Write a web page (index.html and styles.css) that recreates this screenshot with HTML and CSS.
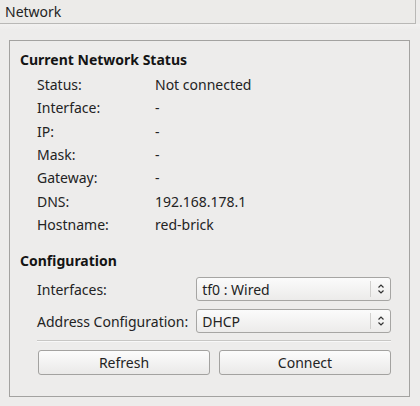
FILE: index.html
```html
<!DOCTYPE html>
<html>
<head>
<meta charset="utf-8">
<link rel="stylesheet" href="styles.css">
</head>
<body>
<div class="tabbar"><span class="tab-title">Network</span></div>
<div class="page">
  <div class="frame">
    <div class="section-title">Current Network Status</div>
    <div class="status-grid">
      <div class="lbl">Status:</div><div class="val">Not connected</div>
      <div class="lbl">Interface:</div><div class="val">-</div>
      <div class="lbl">IP:</div><div class="val">-</div>
      <div class="lbl">Mask:</div><div class="val">-</div>
      <div class="lbl">Gateway:</div><div class="val">-</div>
      <div class="lbl">DNS:</div><div class="val">192.168.178.1</div>
      <div class="lbl">Hostname:</div><div class="val">red-brick</div>
    </div>
    <div class="section-title config-title">Configuration</div>
    <div class="config-grid">
      <div class="lbl">Interfaces:</div>
      <div class="combo"><span class="combo-text">tf0 : Wired</span><span class="combo-arrow"><svg width="8" height="12" viewBox="0 0 8 12"><path d="M1.5 4.5 L4 2 L6.5 4.5 M1.5 7.5 L4 10 L6.5 7.5" fill="none" stroke="#333" stroke-width="1.2"/></svg></span></div>
      <div class="lbl">Address Configuration:</div>
      <div class="combo"><span class="combo-text">DHCP</span><span class="combo-arrow"><svg width="8" height="12" viewBox="0 0 8 12"><path d="M1.5 4.5 L4 2 L6.5 4.5 M1.5 7.5 L4 10 L6.5 7.5" fill="none" stroke="#333" stroke-width="1.2"/></svg></span></div>
    </div>
    <div class="separator"></div>
    <div class="buttons">
      <button class="btn">Refresh</button>
      <button class="btn">Connect</button>
    </div>
  </div>
</div>
</body>
</html>
```
FILE: styles.css
```css
html, body {
  margin: 0;
  padding: 0;
  background: #edeceb;
  font-family: "Noto Sans", "DejaVu Sans", sans-serif;
  font-size: 14px;
  color: #232323;
}
.tabbar {
  height: 24px;
  width: 416px;
  box-sizing: border-box;
  border-bottom: 1px solid #b9b8b6;
  border-right: 1px solid #b9b8b6;
  background: #ecebe9;
  display: flex;
  align-items: center;
  padding-left: 5px;
}
.tab-title {
  color: #232323;
}
.page {
  padding: 16px 10px 9px 9px;
  background: linear-gradient(#f2f1f0 0, #edeceb 6px);
}
.frame {
  border: 1px solid #a3a2a0;
  height: 357px;
  box-sizing: border-box;
  padding: 11px 18px 0 10px;
}
.section-title {
  font-weight: bold;
  height: 16px;
  line-height: 16px;
  color: #141414;
}
.status-grid {
  display: grid;
  grid-template-columns: 118px 1fr;
  grid-auto-rows: 23.33px;
  align-items: center;
  margin-top: 5px;
  padding-left: 17px;
}
.config-title {
  margin-top: 17px;
}
.config-grid {
  display: grid;
  grid-template-columns: auto 1fr;
  grid-auto-rows: 24px;
  column-gap: 8px;
  row-gap: 8px;
  align-items: center;
  margin-top: 8px;
  padding-left: 17px;
}
.combo {
  height: 24px;
  box-sizing: border-box;
  border: 1px solid #a6a5a3;
  border-radius: 3px;
  background: linear-gradient(#fbfbfb, #ecebea);
  display: flex;
  align-items: center;
}
.combo-text {
  flex: 1;
  padding-left: 5px;
}
.combo-arrow {
  width: 19px;
  height: 16px;
  border-left: 1px solid #d0cfcd;
  display: flex;
  align-items: center;
  justify-content: center;
}
.separator {
  margin: 7px 0 0 17px;
  border-top: 1px solid #c8c7c5;
  border-bottom: 1px solid #f8f8f8;
}
.buttons {
  display: flex;
  gap: 9px;
  margin-top: 8px;
  padding-left: 18px;
}
.btn {
  flex: 1;
  height: 25px;
  font-family: inherit;
  font-size: 14px;
  color: #232323;
  border: 1px solid #a3a2a0;
  border-radius: 3px;
  background: linear-gradient(#fcfcfc, #eae9e8);
  padding: 0;
}
```
